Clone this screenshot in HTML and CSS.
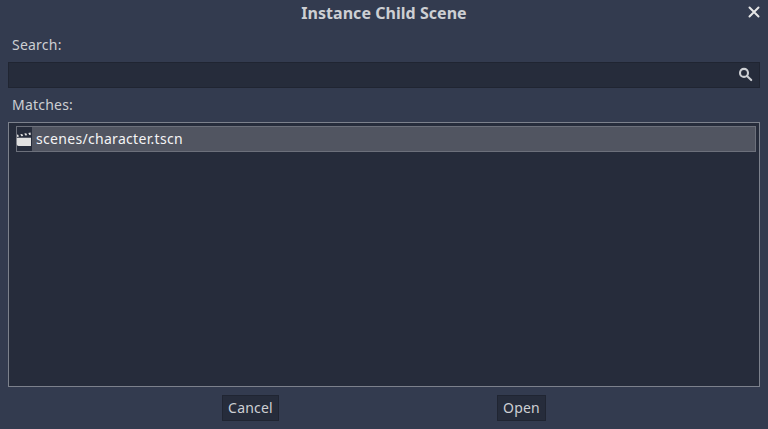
FILE: index.html
```html
<!DOCTYPE html>
<html lang="en">
<head>
<meta charset="utf-8">
<title>Instance Child Scene</title>
<link rel="stylesheet" href="styles.css">
</head>
<body>
<main class="dialog">
  <header class="titlebar">
    <h1>Instance Child Scene</h1>
    <button class="close" aria-label="Close"><svg width="12" height="12" viewBox="0 0 12 12"><path d="M1.500 1.500l9 9M10.500 1.500l-9 9"/></svg></button>
  </header>
  <label class="caption search-caption">Search:</label>
  <div class="search">
    <svg width="16" height="16" viewBox="0 0 16 16"><circle cx="6" cy="5.900" r="4"/><path d="M9 8.900l4.200 4.200"/></svg>
  </div>
  <div class="caption matches-caption">Matches:</div>
  <div class="tree">
    <div class="row">
      <span class="icon"><svg width="16" height="16" viewBox="0 0 16 16"><path d="M.8 6.800H15V15H2.500A1.700 1.700 0 0 1 .8 13.300z"/><path d="M1 3.800l1-.2 1 1.900-2 .4zM4.300 3.200l1.900-.3 1 2-1.900.3zM8.300 2.500l1.900-.3 1 2-1.900.3zM12.300 1.900l2.200-.4.4 2.200-1.600.2z"/></svg></span>
      <span class="name">scenes/character.tscn</span>
    </div>
  </div>
  <footer class="actions">
    <button class="btn cancel">Cancel</button>
    <button class="btn open">Open</button>
  </footer>
</main>
</body>
</html>
```
FILE: styles.css
```css
* { box-sizing: border-box; }
body { margin: 0; background: #333b4f; color: #cdcfd3; font: 14px/20px "Noto Sans", sans-serif; }
.dialog { width: 768px; height: 429px; padding: 0 8px; display: flex; flex-direction: column; overflow: hidden; }
.titlebar { height: 26px; display: flex; justify-content: center; position: relative; }
h1 { margin: 0; font-size: 16px; line-height: 26px; font-weight: 700; letter-spacing: 0.04px; }
.close { position: absolute; right: 0; top: 6px; padding: 0; border: 0; background: none; width: 12px; height: 12px; }
.close svg { display: block; fill: none; stroke: #e6e6e6; stroke-width: 2; stroke-linecap: round; }
.caption { height: 20px; padding-left: 4px; letter-spacing: 0.22px; }
.search-caption { margin-top: 9px; }
.search { margin-top: 7px; height: 26px; background: #262c3b; border: 1px solid #202532; display: flex; align-items: center; justify-content: flex-end; padding-right: 5px; }
.search svg { fill: none; stroke: #cdcfd3; stroke-width: 2.1; stroke-linecap: round; }
.matches-caption { margin-top: 7px; }
.tree { margin-top: 7px; height: 265px; background: #262c3b; border: 1px solid #7c818c; padding: 3px 3px 0 7px; }
.row { height: 26px; display: flex; align-items: center; background: #515561; border: 1px solid #6c707b; color: #fff; }
.icon { width: 16px; height: 24px; margin-left: -1px; display: flex; align-items: center; background: linear-gradient(90deg, #6c707b 1px, #262c3b 1px); }
.icon svg { display: block; fill: #e0e0e0; }
.name { margin-left: 4px; letter-spacing: 0.31px; color: #f4f4f5; }
.actions { margin-top: 8px; display: flex; padding-left: 214px; gap: 218px; }
.btn { height: 26px; padding: 0; background: #262c3b; border: 1px solid #202532; color: inherit; font: inherit; letter-spacing: 0.2px; }
.cancel { width: 57px; }
.open { width: 49px; }
```
